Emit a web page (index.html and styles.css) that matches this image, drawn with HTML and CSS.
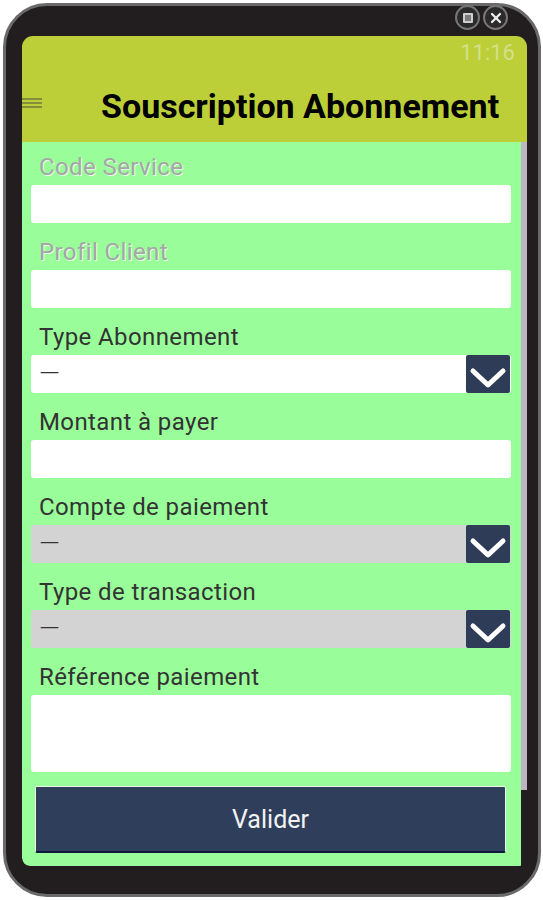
FILE: index.html
```html
<!DOCTYPE html>
<html lang="fr">
<head>
    <meta charset="UTF-8">
    <meta name="viewport" content="width=device-width, initial-scale=1.0">
    <title>Souscription Abonnement</title>

    <link rel="stylesheet" href="styles.css">
</head>
<body>
    <div class="device">
        <div class="window-btns">
            <span class="win-btn">
                <svg width="12" height="12" viewBox="0 0 12 12">
                    <rect x="1" y="1" width="10" height="10" rx="1" fill="#cfcfcf"/>
                    <path d="M3 4h6M3 6h6M3 8h6" stroke="#2a2a2a" stroke-width="1"/>
                </svg>
            </span>
            <span class="win-btn">
                <svg width="12" height="12" viewBox="0 0 12 12">
                    <path d="M2 2L10 10M10 2L2 10" stroke="#f2f2f2" stroke-width="2.2" stroke-linecap="round"/>
                </svg>
            </span>
        </div>

        <div class="screen">
            <header class="appbar">
                <div class="status">11:16</div>
                <div class="title-row">
                    <svg class="menu" width="20" height="12" viewBox="0 0 20 12">
                        <path d="M0 2h20M0 6h20M0 10h20" stroke="#6f7a3c" stroke-width="1.6"/>
                    </svg>
                    <h1>Souscription Abonnement</h1>
                </div>
            </header>

            <div class="content">
                <form class="form">
                    <div class="field">
                        <label class="disabled">Code Service</label>
                        <input type="text" class="box">
                    </div>
                    <div class="field">
                        <label class="disabled">Profil Client</label>
                        <input type="text" class="box">
                    </div>
                    <div class="field">
                        <label>Type Abonnement</label>
                        <div class="box select">
                            <span class="value">—</span>
                            <span class="select-btn">
                                <svg width="44" height="38" viewBox="0 0 44 38">
                                    <polyline points="7,16 22,30 37,16" fill="none" stroke="#fff" stroke-width="5" stroke-linecap="round" stroke-linejoin="round"/>
                                </svg>
                            </span>
                        </div>
                    </div>
                    <div class="field">
                        <label>Montant à payer</label>
                        <input type="text" class="box">
                    </div>
                    <div class="field">
                        <label>Compte de paiement</label>
                        <div class="box select locked">
                            <span class="value">—</span>
                            <span class="select-btn">
                                <svg width="44" height="38" viewBox="0 0 44 38">
                                    <polyline points="7,16 22,30 37,16" fill="none" stroke="#fff" stroke-width="5" stroke-linecap="round" stroke-linejoin="round"/>
                                </svg>
                            </span>
                        </div>
                    </div>
                    <div class="field">
                        <label>Type de transaction</label>
                        <div class="box select locked">
                            <span class="value">—</span>
                            <span class="select-btn">
                                <svg width="44" height="38" viewBox="0 0 44 38">
                                    <polyline points="7,16 22,30 37,16" fill="none" stroke="#fff" stroke-width="5" stroke-linecap="round" stroke-linejoin="round"/>
                                </svg>
                            </span>
                        </div>
                    </div>
                    <div class="field">
                        <label>Référence paiement</label>
                        <textarea class="box area"></textarea>
                    </div>
                    <button type="button" class="submit">Valider</button>
                </form>
                <div class="scroll">
                    <div class="thumb"></div>
                </div>
            </div>
        </div>
    </div>
</body>
</html>
```

FILE: styles.css
```css
body{
    margin: 0;
    background-color: #fff;
    font-family: Roboto, "Liberation Sans", sans-serif;
}

.device{
    position: relative;
    box-sizing: border-box;
    width: 538px;
    height: 894px;
    margin: 3px 2px 3px 3px;
    padding: 30px 11px 28px 16px;
    background-color: #221e1f;
    border: 3px solid #6a6a6a;
    border-radius: 44px;
}

.window-btns{
    position: absolute;
    top: -1px;
    right: 30px;
    display: flex;
    gap: 3px;
}

.win-btn{
    display: flex;
    align-items: center;
    justify-content: center;
    width: 21px;
    height: 21px;
    border: 2px solid #777;
    border-radius: 50%;
    background-color: #2b2b2b;
}

.screen{
    display: flex;
    flex-direction: column;
    height: 100%;
    border-radius: 11px 11px 8px 8px;
    overflow: hidden;
}

.appbar{
    height: 106px;
    background-color: #bccf38;
    display: flex;
    flex-direction: column;
}

.status{
    height: 34px;
    line-height: 34px;
    padding-right: 12px;
    text-align: right;
    font-size: 22px;
    color: #d4e08c;
}

.title-row{
    flex: 1;
    display: flex;
    align-items: center;
}

.menu{
    margin-top: -6px;
}

.title-row h1{
    margin: 0 0 0 59px;
    font-size: 34px;
    font-weight: bold;
    color: #000;
}

.content{
    flex: 1;
    display: flex;
}

.form{
    flex: 1;
    margin: 0;
    padding: 10px 10px 0 9px;
    background-color: #99fe99;
    border-bottom-left-radius: 8px;
}

.field{
    margin-bottom: 14px;
}

.field label{
    display: block;
    height: 30px;
    margin-bottom: 3px;
    padding-left: 8px;
    line-height: 30px;
    font-size: 24px;
    letter-spacing: 0.4px;
    color: #333;
}

.field label.disabled{
    color: #a6a6a6;
    text-shadow: 1px 1px 0 #e6ffe6;
}

.box{
    display: block;
    box-sizing: border-box;
    width: 100%;
    height: 38px;
    margin: 0;
    border: none;
    border-radius: 3px;
    background-color: #fff;
    font-family: inherit;
}

.select{
    display: flex;
    align-items: center;
    justify-content: space-between;
    padding-right: 1px;
}

.select.locked{
    background-color: #d3d3d3;
}

.select .value{
    padding-left: 8px;
    font-size: 27px;
    font-weight: 300;
    color: #333;
}

.select-btn{
    display: flex;
    width: 44px;
    height: 38px;
    background-color: #2f3c58;
    border-radius: 2px;
}

.area{
    height: 77px;
    resize: none;
}

.submit{
    display: block;
    width: 471px;
    height: 67px;
    margin: 0 0 0 4px;
    border: 1px solid #e8f5e8;
    border-bottom: 2px solid #0e1840;
    border-radius: 2px;
    background-color: #2f3f5b;
    color: #f2f2f2;
    font-family: inherit;
    font-size: 25px;
}

.scroll{
    width: 6px;
}

.thumb{
    height: 648px;
    background-color: #bdb5c4;
}
```
